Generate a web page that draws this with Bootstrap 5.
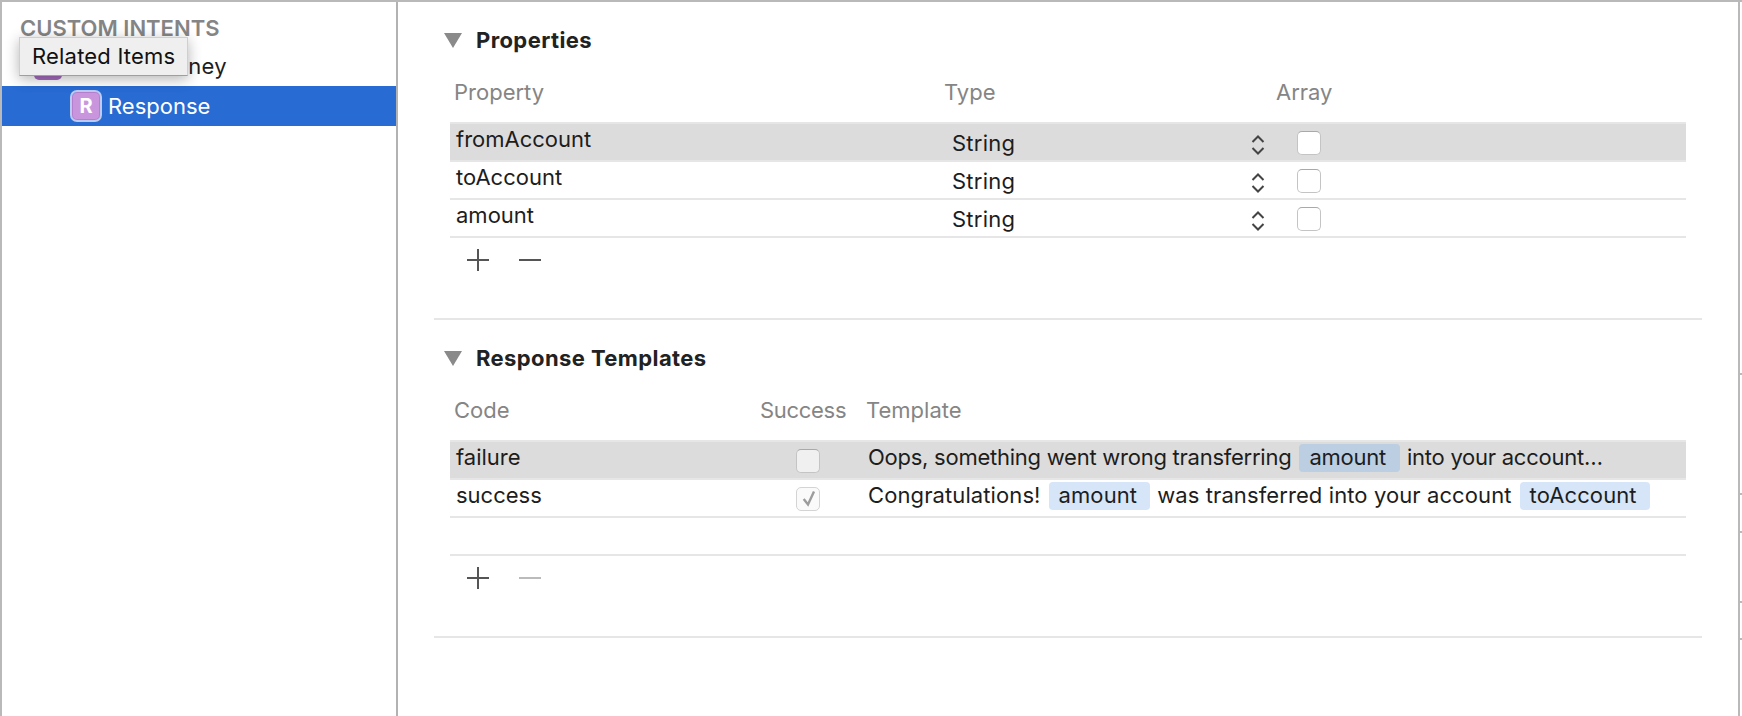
<!DOCTYPE html>
<html lang="en">
<head>
    <meta charset="UTF-8">
    <title>Custom Intents</title>
    <link href="https://cdn.jsdelivr.net/npm/bootstrap@5.3.0/dist/css/bootstrap.min.css" rel="stylesheet">
    <style>
        html, body { height: 100%; }
        body {
            font-family: Inter, "Liberation Sans", sans-serif;
            font-size: 22px;
            line-height: 24px;
            color: #1d1d1d;
            background: #fff;
            overflow: hidden;
        }
        .app-frame {
            height: 716px;
            position: relative;
            border-top: 2px solid #b9b9b9;
            border-left: 2px solid #b9b9b9;
            padding-right: 2px;
        }
        .edge-tick { position: absolute; right: 0; width: 2px; height: 2px; background: #b9b9b9; }

        /* left list */
        .side-pane {
            width: 396px;
            flex: none;
            border-right: 2px solid #b2b2b2;
            position: relative;
        }
        .side-title {
            padding: 14px 0 0 18px;
            height: 44px;
            font-weight: 600;
            color: #858585;
        }
        .side-row { height: 40px; padding-left: 30px; gap: 1px; letter-spacing: .3px; }
        .side-row.indented { padding-left: 68px; gap: 6px; letter-spacing: 0; }
        .side-row.active { background: #276bd3; color: #fff; }
        .intent-icon {
            width: 32px;
            height: 32px;
            flex: none;
            border-radius: 7px;
            border: 2px solid transparent;
            background: #a76cc0;
            background-clip: padding-box;
            color: #fff;
            font-weight: 700;
            font-size: 20px;
        }
        .active .intent-icon {
            background: #c996dd;
            background-clip: padding-box;
            border-color: #bccbef;
            box-shadow: inset 0 0 0 1px #b57fd0;
        }
        .tip-box {
            position: absolute;
            left: 17px;
            top: 35px;
            width: 169px;
            height: 39px;
            padding: 6px 0 0 12px;
            letter-spacing: .2px;
            background: #efefef;
            border: 1px solid #cfcfcf;
            border-bottom-color: #9f9f9f;
            box-shadow: 0 3px 14px rgba(0, 0, 0, .3);
            color: #111;
        }

        /* right editor */
        .main-pane { padding-left: 36px; border-right: 2px solid #b9b9b9; }
        .block { width: 1268px; height: 318px; border-bottom: 2px solid #e6e6e6; }
        .block-head { padding: 26px 0 0 10px; gap: 14px; font-weight: 700; color: #222; letter-spacing: .4px; }
        .tri { width: 18px; height: 15px; flex: none; }
        .col-heads { color: #858585; height: 70px; padding: 28px 0 0 20px; }
        .h-prop { width: 490px; }
        .h-type { width: 332px; }
        .h-code { width: 306px; }
        .h-success { width: 106px; letter-spacing: -.3px; }
        .grid-rows { width: 1236px; margin-left: 16px; }
        .grid-row {
            height: 38px;
            padding: 3px 0 0 6px;
            border-bottom: 2px solid #e6e6e6;
        }
        .grid-row.selected { height: 40px; background: #dcdcdc; border-top: 2px solid #e6e6e6; }
        .c-prop { width: 496px; flex: none; }
        .c-type { width: 298px; flex: none; margin-top: 4px; letter-spacing: .25px; }
        .c-code { width: 340px; flex: none; }
        .c-success { width: 72px; flex: none; }
        .c-template { white-space: nowrap; line-height: 26px; margin-top: -1px; letter-spacing: .1px; }
        .selected .c-template { letter-spacing: -.25px; }
        .updown { width: 16px; height: 22px; flex: none; margin-top: 7px; }
        .chk {
            width: 24px;
            height: 24px;
            flex: none;
            margin: 4px 0 0 31px;
            border-radius: 5px;
            background: #fff;
            border: 1px solid #c4c4c4;
            border-top-color: #a9a9a9;
        }
        .c-success .chk { margin-left: 0; display: block; }
        .chk.dim { background: #f0f0f0; }
        .chk.ticked { background: #fafafa; border-color: #d4d4d4; }
        .token {
            display: inline-block;
            height: 28px;
            padding: 0 13px 0 10px;
            margin: 0 7px 0 8px;
            border-radius: 4px;
            background: #d6e5f8;
        }
        .selected .token { background: #bbcee2; padding-right: 14px; }
        .add-remove { padding: 11px 0 0 33px; gap: 30px; }
        .add-remove svg { width: 22px; height: 22px; }
    </style>
</head>
<body>
    <div class="app-frame d-flex" id="frame">
        <div class="side-pane">
            <div class="side-title">CUSTOM INTENTS</div>
            <div class="side-row d-flex align-items-center">
                <span class="intent-icon d-flex align-items-center justify-content-center">I</span>
                <span>TransferMoney</span>
            </div>
            <div class="side-row indented active d-flex align-items-center">
                <span class="intent-icon d-flex align-items-center justify-content-center">R</span>
                <span>Response</span>
            </div>
            <div class="tip-box">Related Items</div>
        </div>

        <div class="main-pane flex-grow-1">
            <section class="block">
                <div class="block-head d-flex align-items-center">
                    <svg class="tri" viewBox="0 0 18 15"><path d="M0 0H18L9 15Z" fill="#8a8a8a"/></svg>
                    <span>Properties</span>
                </div>
                <div class="col-heads d-flex">
                    <span class="h-prop">Property</span>
                    <span class="h-type">Type</span>
                    <span>Array</span>
                </div>
                <div class="grid-rows" id="propRows"></div>
                <div class="add-remove d-flex">
                    <svg viewBox="0 0 22 22"><path d="M11 0V22M0 11H22" stroke="#555" stroke-width="2" fill="none"/></svg>
                    <svg viewBox="0 0 22 22"><path d="M0 11H22" stroke="#555" stroke-width="2" fill="none"/></svg>
                </div>
            </section>
            <section class="block">
                <div class="block-head d-flex align-items-center">
                    <svg class="tri" viewBox="0 0 18 15"><path d="M0 0H18L9 15Z" fill="#8a8a8a"/></svg>
                    <span>Response Templates</span>
                </div>
                <div class="col-heads d-flex">
                    <span class="h-code">Code</span>
                    <span class="h-success">Success</span>
                    <span>Template</span>
                </div>
                <div class="grid-rows">
                    <div class="grid-row selected d-flex">
                        <span class="c-code">failure</span>
                        <span class="c-success"><span class="chk dim"></span></span>
                        <span class="c-template">Oops, something went wrong transferring<span class="token">amount</span>into your account…</span>
                    </div>
                    <div class="grid-row d-flex">
                        <span class="c-code">success</span>
                        <span class="c-success"><span class="chk ticked"><svg class="d-block" width="22" height="22" viewBox="0 0 22 22"><path d="M6.7 11L11 16.5L17 3.5" stroke="#9c9c9c" stroke-width="2.4" fill="none"/></svg></span></span>
                        <span class="c-template">Congratulations!<span class="token">amount</span>was transferred into your account<span class="token">toAccount</span></span>
                    </div>
                    <div class="grid-row"></div>
                </div>
                <div class="add-remove d-flex">
                    <svg viewBox="0 0 22 22"><path d="M11 0V22M0 11H22" stroke="#555" stroke-width="2" fill="none"/></svg>
                    <svg viewBox="0 0 22 22"><path d="M0 11H22" stroke="#bbb" stroke-width="2" fill="none"/></svg>
                </div>
            </section>
        </div>
    </div>

    <script>
        // property rows, first one is selected
        const props = ['fromAccount', 'toAccount', 'amount'];
        document.getElementById('propRows').innerHTML = props.map((name, i) => `
            <div class="grid-row ${i === 0 ? 'selected' : ''} d-flex">
                <span class="c-prop">${name}</span>
                <span class="c-type">String</span>
                <svg class="updown" viewBox="0 0 16 22"><path d="M2.5 8L8 2.5L13.5 8M2.5 14L8 19.5L13.5 14" stroke="#444" stroke-width="2" fill="none"/></svg>
                <span class="chk d-block"></span>
            </div>
        `).join('');

        // little ticks on the window edge
        const frame = document.getElementById('frame');
        [371, 491, 529, 599, 636].forEach(y => {
            const tick = document.createElement('div');
            tick.className = 'edge-tick';
            tick.style.top = y + 'px';
            frame.appendChild(tick);
        });
    </script>
    <script src="https://cdn.jsdelivr.net/npm/bootstrap@5.3.0/dist/js/bootstrap.bundle.min.js"></script>
</body>
</html>
